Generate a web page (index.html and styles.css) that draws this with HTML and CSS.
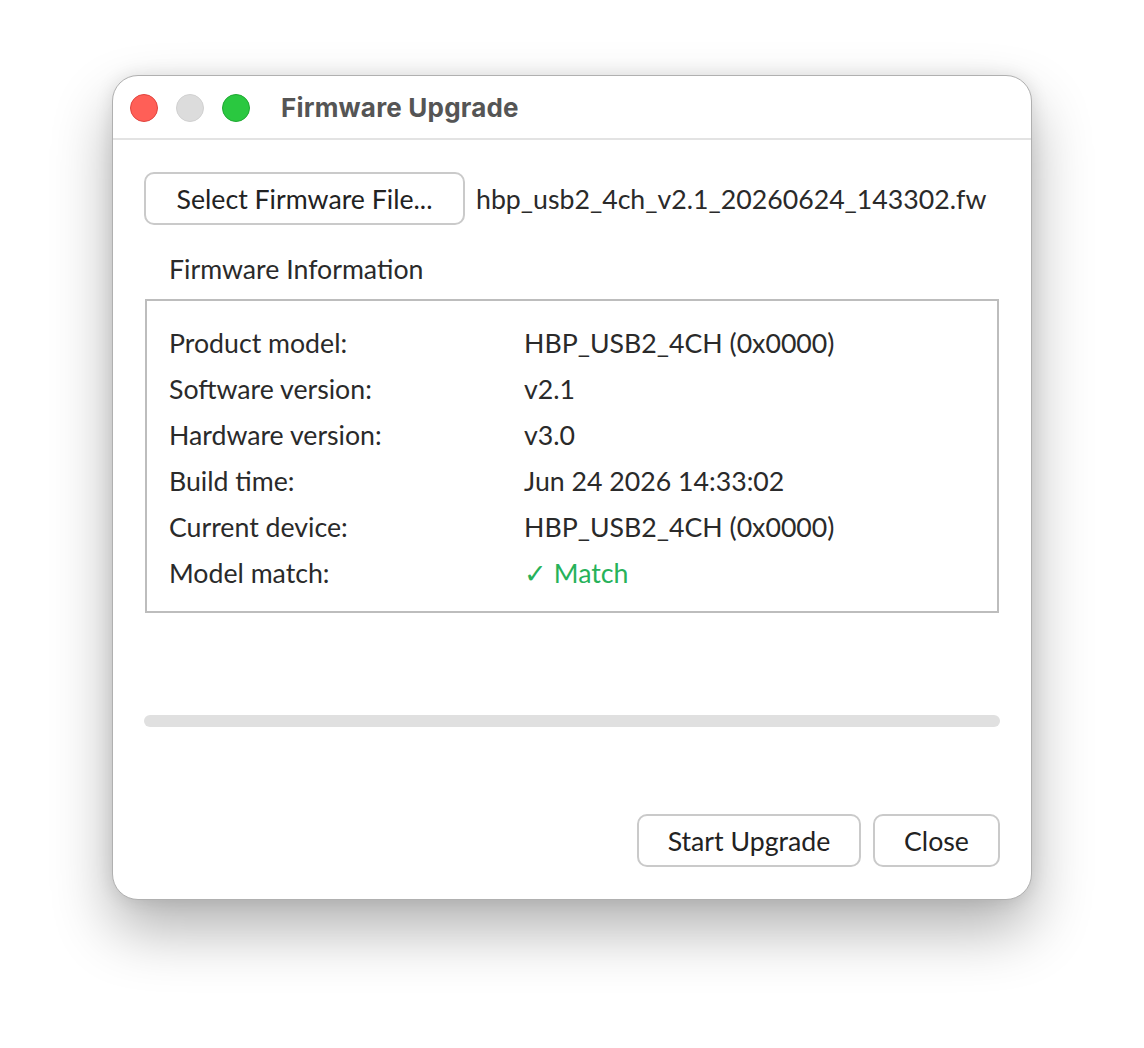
FILE: index.html
```html
<!DOCTYPE html>
<html>
<head>
<meta charset="utf-8">
<link rel="stylesheet" href="styles.css">
</head>
<body>
<div class="page">
<div class="window">
  <div class="titlebar">
    <div class="lights">
      <span class="light red"></span>
      <span class="light gray"></span>
      <span class="light green"></span>
    </div>
    <div class="title">Firmware Upgrade</div>
  </div>
  <div class="content">
    <div class="file-row">
      <button class="btn select-btn">Select Firmware File...</button>
      <span class="filename">hbp_usb2_4ch_v2.1_20260624_143302.fw</span>
    </div>
    <div class="group-title">Firmware Information</div>
    <div class="info-box">
      <div class="row"><span class="label">Product model:</span><span class="value">HBP_USB2_4CH (0x0000)</span></div>
      <div class="row"><span class="label">Software version:</span><span class="value">v2.1</span></div>
      <div class="row"><span class="label">Hardware version:</span><span class="value">v3.0</span></div>
      <div class="row"><span class="label">Build time:</span><span class="value">Jun 24 2026 14:33:02</span></div>
      <div class="row"><span class="label">Current device:</span><span class="value">HBP_USB2_4CH (0x0000)</span></div>
      <div class="row"><span class="label">Model match:</span><span class="value match">✓ Match</span></div>
    </div>
    <div class="progress"></div>
    <div class="actions">
      <button class="btn start-btn">Start Upgrade</button>
      <button class="btn close-btn">Close</button>
    </div>
  </div>
</div>
</div>
</body>
</html>
```

FILE: styles.css
```css
html, body {
  margin: 0;
  padding: 0;
  background: #ffffff;
}
body {
  font-family: "Lato", "Noto Sans", sans-serif;
  color: #2a2a2a;
}
.page {
  height: 1048px;
  padding: 75px 0 0 112px;
  box-sizing: border-box;
}
.window {
  box-sizing: border-box;
  width: 920px;
  height: 825px;
  background: #ffffff;
  border: 1px solid #b0b0b0;
  border-radius: 26px;
  box-shadow: 0 30px 60px rgba(0, 0, 0, 0.30), 0 0 18px rgba(0, 0, 0, 0.10);
  display: flex;
  flex-direction: column;
  overflow: hidden;
}
.titlebar {
  height: 64px;
  box-sizing: border-box;
  padding-top: 1px;
  border-bottom: 2px solid #e3e3e3;
  display: flex;
  align-items: center;
  padding-left: 17px;
  flex-shrink: 0;
}
.lights {
  display: flex;
  gap: 18px;
}
.light {
  width: 28px;
  height: 28px;
  border-radius: 50%;
  box-sizing: border-box;
}
.red { background: #ff5f57; border: 1px solid #e0443e; }
.gray { background: #dcdcdc; border: 1px solid #d0d0d0; }
.green { background: #2ac840; border: 1px solid #1fa832; }
.title {
  margin-left: 31px;
  font-family: "Inter", "Noto Sans", sans-serif;
  font-weight: 700;
  font-size: 26px;
  color: #555555;
  letter-spacing: 0.2px;
}
.content {
  flex: 1;
  display: flex;
  flex-direction: column;
  padding: 32px 31px 32px 31px;
}
.btn {
  font-family: "Lato", "Noto Sans", sans-serif;
  font-size: 26.7px;
  color: #222222;
  background: #ffffff;
  border: 2px solid #cacaca;
  border-radius: 10px;
  height: 53px;
  padding: 0;
  cursor: default;
}
.file-row {
  display: flex;
  align-items: center;
  gap: 11px;
}
.select-btn {
  width: 321px;
}
.filename {
  font-size: 26.7px;
  color: #2a2a2a;
  white-space: nowrap;
}
.group-title {
  font-size: 26.7px;
  margin: 24px 0 0 25px;
  line-height: 40px;
}
.info-box {
  margin: 10px 1px 0 1px;
  height: 314px;
  box-sizing: border-box;
  border: 2px solid #bdbdbd;
  padding: 19px 22px 0 22px;
}
.row {
  display: flex;
  height: 46px;
  align-items: center;
  font-size: 26.7px;
}
.label {
  width: 355px;
  flex-shrink: 0;
}
.match {
  color: #27b25a;
}
.progress {
  margin-top: 102px;
  height: 12px;
  border-radius: 6px;
  background: #e0e0e0;
}
.actions {
  margin-top: auto;
  display: flex;
  justify-content: flex-end;
  gap: 12px;
}
.start-btn { width: 224px; }
.close-btn { width: 127px; }
```
